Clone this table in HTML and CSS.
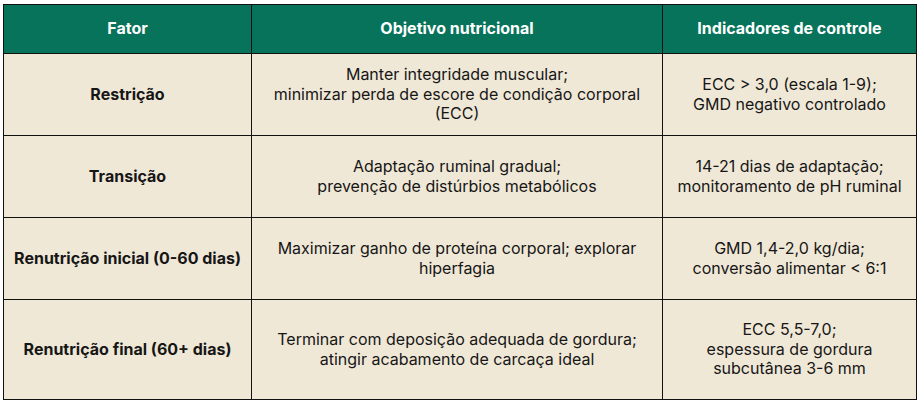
FILE: index.html
```html
<!DOCTYPE html>
<html lang="pt">
<head>
<meta charset="utf-8">
<link rel="stylesheet" href="styles.css">
</head>
<body>
<div class="wrap">
<table class="grid">
  <colgroup>
    <col class="c1"><col class="c2"><col class="c3">
  </colgroup>
  <thead>
    <tr class="head">
      <th>Fator</th>
      <th>Objetivo nutricional</th>
      <th>Indicadores de controle</th>
    </tr>
  </thead>
  <tbody>
    <tr class="r">
      <td class="name">Restrição</td>
      <td>Manter integridade muscular;<br>minimizar perda de escore de condição corporal (ECC)</td>
      <td>ECC &gt; 3,0 (escala 1-9);<br>GMD negativo controlado</td>
    </tr>
    <tr class="r">
      <td class="name">Transição</td>
      <td>Adaptação ruminal gradual;<br>prevenção de distúrbios metabólicos</td>
      <td>14-21 dias de adaptação;<br>monitoramento de pH ruminal</td>
    </tr>
    <tr class="r">
      <td class="name">Renutrição inicial (0-60 dias)</td>
      <td>Maximizar ganho de proteína corporal; explorar hiperfagia</td>
      <td>GMD 1,4-2,0 kg/dia;<br>conversão alimentar &lt; 6:1</td>
    </tr>
    <tr class="r last">
      <td class="name">Renutrição final (60+ dias)</td>
      <td>Terminar com deposição adequada de gordura;<br>atingir acabamento de carcaça ideal</td>
      <td>ECC 5,5-7,0;<br>espessura de gordura subcutânea 3-6 mm</td>
    </tr>
  </tbody>
</table>
</div>
</body>
</html>
```
FILE: styles.css
```css
html, body {
  margin: 0;
  padding: 0;
  background: #ffffff;
}
.wrap {
  padding: 4px 0 0 3px;
}
.grid {
  border-collapse: collapse;
  width: 913px;
  table-layout: fixed;
  font-family: Inter, "Noto Sans", sans-serif;
  font-size: 16px;
  line-height: 19.5px;
  color: #161616;
  border: 1.5px solid #111;
}
.c1 { width: 248px; }
.c2 { width: 411px; }
.c3 { width: 254px; }
.grid th, .grid td {
  border: 1.5px solid #111;
  text-align: center;
  vertical-align: middle;
  padding: 0 12px;
}
.grid .name {
  padding: 0 6px;
  font-weight: 700;
  white-space: nowrap;
}
.head th {
  background: #06735a;
  color: #ffffff;
  font-weight: 700;
  height: 48px;
}
.r td {
  background: #f0e8d7;
  height: 81px;
}
.r.last td {
  height: 99px;
}
```
